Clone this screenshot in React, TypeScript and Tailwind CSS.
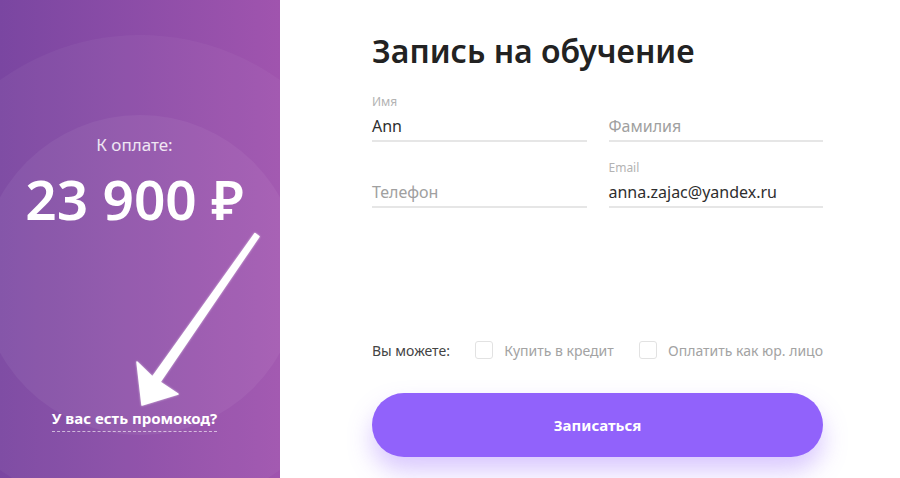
const FONT = { fontFamily: '"Noto Sans", "Open Sans", sans-serif' };

function Field({ label, value, placeholder }: { label?: string; value?: string; placeholder: string }) {
  return (
    <div className="flex flex-col">
      <div className="h-[16px] text-[12px] leading-[16px] text-[#b3b3b3]">{label}</div>
      <div className={`mt-[4px] h-[24px] text-[16px] leading-[24px] ${value ? 'text-[#2e2e2e]' : 'text-[#a0a0a0]'}`}>
        {value || placeholder}
      </div>
      <div className="mt-[2px] h-[2px] bg-[#e6e6e6]" />
    </div>
  );
}

function Checkbox({ text }: { text: string }) {
  return (
    <div className="flex items-center gap-[11px]">
      <span className="w-[18px] h-[18px] rounded-[3px] border border-[#e2e2e2] bg-white" />
      <span className="text-[14px] text-[#a3a3a3]">{text}</span>
    </div>
  );
}

function Arrow() {
  return (
    <svg className="absolute inset-0 pointer-events-none" width="280" height="478" viewBox="0 0 280 478">
      <polygon
        points="255,233.5 259,236.5 160,382 178,394 142,405 137,362 152.5,377"
        fill="#ffffff"
        stroke="#ffffff"
        strokeWidth="1.5"
        strokeLinejoin="round"
        style={{ filter: 'drop-shadow(0 0 1px rgba(255,255,255,0.6))' }}
      />
    </svg>
  );
}

export default function App() {
  return (
    <div className="w-[900px] h-[478px] flex bg-white overflow-hidden" style={FONT}>
      {/* Payment panel */}
      <div className="relative w-[280px] shrink-0 overflow-hidden bg-gradient-to-r from-[#7a46a1] to-[#a054ae]">
        <div className="absolute left-[-100px] top-[35px] w-[480px] h-[480px] rounded-full bg-white/[0.04]" />
        <div className="absolute left-[-20px] top-[115px] w-[320px] h-[320px] rounded-full bg-white/[0.05]" />
        <Arrow />
        <div className="relative flex flex-col items-center h-full pr-[11px]">
          <div className="mt-[133px] text-[17px] leading-[24px] text-white/85">К оплате:</div>
          <div className="mt-[11px] text-[55px] leading-[62px] font-semibold text-white">23 900 ₽</div>
          <div className="mt-auto mb-[46px] text-[15px] leading-[20px] font-bold text-white border-b border-dashed border-white/60 pb-[3px]">
            У вас есть промокод?
          </div>
        </div>
      </div>

      {/* Form */}
      <div className="flex-1 pl-[92px] pr-[77px] pt-[32px]">
        <h1 className="text-[32px] leading-[38px] font-semibold text-[#222222]">Запись на обучение</h1>
        <div className="mt-[24px] grid grid-cols-2 gap-x-[22px] gap-y-[18px]">
          <Field label="Имя" value="Ann" placeholder="Имя" />
          <Field placeholder="Фамилия" />
          <Field placeholder="Телефон" />
          <Field label="Email" value="anna.zajac@yandex.ru" placeholder="Email" />
        </div>
        <div className="mt-[132px] h-[20px] flex items-center justify-between">
          <span className="text-[14px] text-[#444444]">Вы можете:</span>
          <Checkbox text="Купить в кредит" />
          <Checkbox text="Оплатить как юр. лицо" />
        </div>
        <button className="mt-[33px] w-full h-[64px] rounded-full bg-[#9162fb] text-white text-[15px] font-bold shadow-[0_14px_24px_rgba(145,98,251,0.35)]">
          Записаться
        </button>
      </div>
    </div>
  );
}
